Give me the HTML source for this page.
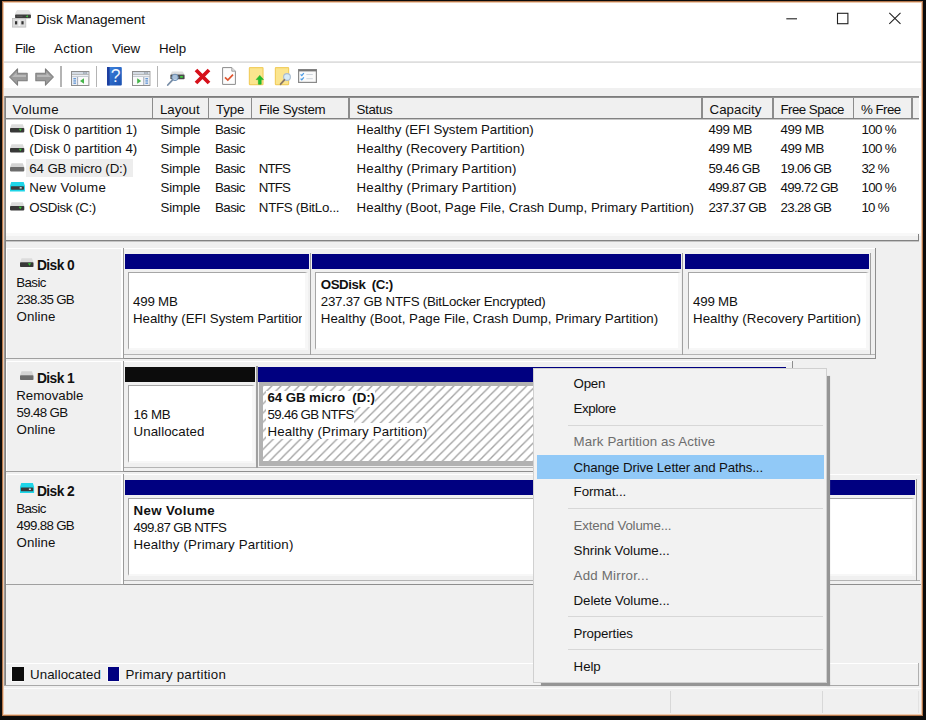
<!DOCTYPE html>
<html lang="en"><head><meta charset="utf-8"><title>Disk Management</title>
<style>
html,body{margin:0;padding:0;}
body{width:926px;height:720px;background:#0b0b0b;overflow:hidden;position:relative;font-family:"Liberation Sans",sans-serif;font-size:13.3px;color:#111;}
.r{position:absolute;box-sizing:border-box;}
.t{position:absolute;white-space:pre;line-height:18px;height:18px;}
svg{position:absolute;overflow:visible;}

</style></head><body>
<div class="r" style="left:2px;top:1px;width:921px;height:715px;background:#f0f0f0;border:1px solid #b4764a;"></div>
<div class="r" style="left:3px;top:2px;width:919px;height:713px;background:transparent;border:1px solid #ecc9ae;"></div>
<div class="r" style="left:4px;top:3px;width:917px;height:85px;background:#fff;"></div>
<div class="r" style="left:4px;top:61px;width:917px;height:1px;background:#e6e6e6;"></div>
<div class="r" style="left:4px;top:62px;width:917px;height:1px;background:#dedede;"></div>
<div class="r" style="left:4px;top:88px;width:917px;height:8px;background:#f0f0f0;"></div>
<svg style="left:780px;top:8px" width="130" height="22" viewBox="0 0 130 22"><g stroke="#222" stroke-width="1.1" fill="none"><path d="M6.3 10.8H17"/><rect x="57.5" y="5.3" width="10.4" height="10.4"/><path d="M109.3 4.9L120.5 15.9M120.5 4.9L109.3 15.9"/></g></svg>
<svg style="left:12px;top:10px" width="19" height="18" viewBox="0 0 19 18"><path d="M5 0.5H16.9L18.9 4.4H3.1Z" fill="#e6e6e6" stroke="#d4d4d4" stroke-width=".4"/><rect x="3.1" y="4.4" width="15.8" height="3.8" rx=".8" fill="#3c3c3c"/><path d="M15.9 5.2V7.4L13.7 6.3Z" fill="#3fd23f"/><rect x="4.6" y="5.8" width="6" height=".9" fill="#5c5c5c"/><rect x="0.5" y="8.4" width="13.3" height="8.7" fill="#dcdcdc" stroke="#bdbdbd" stroke-width=".8"/><rect x="3" y="11.2" width="2.2" height="3.2" fill="#333"/><rect x="9.4" y="11.2" width="2.2" height="3.2" fill="#333"/><rect x="6.4" y="10" width="1.8" height="6" fill="#f4f4f4"/></svg>
<svg style="left:9px;top:68px" width="19" height="18" viewBox="0 0 18.6 17.6"><g><path d="M0.6 8.8L8.4 0.8V5.2H17.8V12.4H8.4V16.8Z" fill="#9b9b9b" stroke="#7c7c7c" stroke-width="1" stroke-linejoin="round"/><path d="M3 8.8L7.4 4.3V6.8H16.6V8.8Z" fill="#b9b9b9"/></g></svg>
<svg style="left:35px;top:68px" width="19" height="18" viewBox="0 0 18.6 17.6"><g transform="translate(18.6 0) scale(-1 1)"><path d="M0.6 8.8L8.4 0.8V5.2H17.8V12.4H8.4V16.8Z" fill="#9b9b9b" stroke="#7c7c7c" stroke-width="1" stroke-linejoin="round"/><path d="M3 8.8L7.4 4.3V6.8H16.6V8.8Z" fill="#b9b9b9"/></g></svg>
<div class="r" style="left:60px;top:66px;width:1.5px;height:21px;background:#b4b4b4;"></div>
<div class="r" style="left:95.6px;top:66px;width:1.5px;height:21px;background:#b4b4b4;"></div>
<div class="r" style="left:156.8px;top:66px;width:1.5px;height:21px;background:#b4b4b4;"></div>
<svg style="left:70.7px;top:70.5px" width="18.4" height="15" viewBox="0 0 18.4 15"><rect x="0.5" y="0.5" width="17.4" height="14" fill="#fafafa" stroke="#8e8e8e"/><rect x="1" y="1" width="16.4" height="2.2" fill="#d3dae3"/><rect x="1" y="3.2" width="16.4" height=".7" fill="#9a9a9a"/><rect x="1" y="3.9" width="16.4" height="1.6" fill="#eceff4"/><rect x="1" y="5.4" width="16.4" height=".6" fill="#a8b0bc"/><rect x="12.2" y="1.4" width="1.4" height="1.2" fill="#7a8694"/><rect x="14.4" y="1.4" width="1.4" height="1.2" fill="#7a8694"/><rect x="1" y="6" width="5.4" height="8" fill="#e9edf3"/><rect x="6.2" y="6" width=".9" height="8" fill="#9aa3b3"/><rect x="2.4" y="7.2" width="2.6" height="1.1" fill="#4a86d0"/><rect x="2.4" y="9.4" width="2.6" height="1.1" fill="#4a86d0"/><rect x="2.4" y="11.6" width="2.6" height="1.1" fill="#4a86d0"/><path d="M13 7.2V12.8L9 10Z" fill="#45b549"/></svg>
<svg style="left:132px;top:70.5px" width="18.4" height="15" viewBox="0 0 18.4 15"><rect x="0.5" y="0.5" width="17.4" height="14" fill="#fafafa" stroke="#8e8e8e"/><rect x="1" y="1" width="16.4" height="2.2" fill="#d3dae3"/><rect x="1" y="3.2" width="16.4" height=".7" fill="#9a9a9a"/><rect x="1" y="3.9" width="16.4" height="1.6" fill="#eceff4"/><rect x="1" y="5.4" width="16.4" height=".6" fill="#a8b0bc"/><rect x="12.2" y="1.4" width="1.4" height="1.2" fill="#7a8694"/><rect x="14.4" y="1.4" width="1.4" height="1.2" fill="#7a8694"/><rect x="12" y="6" width="5.4" height="8" fill="#e9edf3"/><rect x="11.3" y="6" width=".9" height="8" fill="#9aa3b3"/><rect x="13.4" y="7.2" width="2.6" height="1.1" fill="#4a86d0"/><rect x="13.4" y="9.4" width="2.6" height="1.1" fill="#4a86d0"/><rect x="13.4" y="11.6" width="2.6" height="1.1" fill="#4a86d0"/><path d="M5.2 7.2V12.8L9.2 10Z" fill="#45b549"/></svg>
<svg style="left:107px;top:67px" width="15" height="19" viewBox="0 0 15 19"><defs><linearGradient id="hb" x1="0" x2="1" y1="0" y2="1"><stop offset="0" stop-color="#3f86e0"/><stop offset="1" stop-color="#1a4fb0"/></linearGradient></defs><rect x="0" y="0" width="14.8" height="18.4" rx="1" fill="url(#hb)"/><rect x="0" y="0" width="2.6" height="18.4" fill="#1d3fa0"/><text x="8.7" y="15.4" font-family="Liberation Sans,sans-serif" font-size="17.5" text-anchor="middle" fill="#f2f7ff">?</text></svg>
<svg style="left:167px;top:71px" width="18" height="15" viewBox="0 0 18 15"><path d="M5 0.6H15.6L17.6 3.6H3.4Z" fill="#dedede"/><rect x="3.4" y="3.6" width="14.2" height="4.6" rx=".8" fill="#4a4a4a"/><rect x="13.2" y="5" width="2.6" height="1.8" fill="#3fd23f"/><circle cx="8" cy="6.4" r="3.2" fill="#bcd6f2" fill-opacity=".85" stroke="#6e8fb4" stroke-width="1"/><path d="M5.6 8.8L0.8 14" stroke="#7a8fa8" stroke-width="1.8" stroke-linecap="round"/></svg>
<svg style="left:194.3px;top:67.8px" width="17" height="17" viewBox="0 0 17 17"><path d="M2 2L15 15M15 2L2 15" stroke="#d6101a" stroke-width="3.8" stroke-linecap="butt"/></svg>
<svg style="left:222px;top:67.4px" width="14" height="18" viewBox="0 0 14 18"><path d="M0.6 0.6H9.8L13.4 4.2V17.4H0.6Z" fill="#fdfdfd" stroke="#8c8c8c" stroke-width="1"/><path d="M9.8 0.6V4.2H13.4" fill="#e4e4e4" stroke="#8c8c8c" stroke-width=".8"/><path d="M3 10.4L5.8 13L11 7.6" fill="none" stroke="#e0542e" stroke-width="1.7"/></svg>
<svg style="left:248.5px;top:67.4px" width="15" height="18" viewBox="0 0 15 18"><rect x="0.4" y="0.6" width="13.6" height="17" rx=".6" fill="#fbe58e" stroke="#f2cf62" stroke-width="1.2"/><path d="M9.4 17.2V12.6H7.2L10.8 8.4L14.4 12.6H12.2V17.2Z" fill="#22be2c" stroke="#1fae28" stroke-width=".6" stroke-linejoin="round"/></svg>
<svg style="left:274.7px;top:67.4px" width="17" height="18" viewBox="0 0 17 18"><rect x="0.4" y="0.6" width="13.2" height="17" rx=".6" fill="#fbe58e" stroke="#f2cf62" stroke-width="1.2"/><circle cx="12" cy="10" r="3.4" fill="#d6ebf8" stroke="#a9bccf" stroke-width="1.1"/><path d="M9.4 12.8L5.6 17.2" stroke="#8c7a66" stroke-width="1.8" stroke-linecap="round"/></svg>
<svg style="left:298px;top:69.2px" width="19" height="14" viewBox="0 0 19 14"><rect x="0.6" y="0.6" width="17.8" height="12.8" fill="#fafafa" stroke="#8a8a8a" stroke-width="1.2"/><rect x="0.6" y="0.6" width="17.8" height="1.8" fill="#777"/><path d="M2.6 5.4L3.8 6.6L5.8 4.2M2.6 9.6L3.8 10.8L5.8 8.4" fill="none" stroke="#4a9be6" stroke-width="1.3"/><rect x="8.4" y="5" width="6.4" height="1" fill="#cfd6dd"/><rect x="8.4" y="9.2" width="6.4" height="1" fill="#cfd6dd"/></svg>
<div class="r" style="left:4px;top:96px;width:917px;height:137px;background:#fff;"></div>
<div class="r" style="left:4px;top:233px;width:917px;height:3px;background:#f8f8f8;"></div>
<div class="r" style="left:4px;top:96px;width:915px;height:1px;background:#7c7c7c;"></div>
<div class="r" style="left:4px;top:97px;width:915px;height:1px;background:#8e8e8e;"></div>
<div class="r" style="left:4px;top:96px;width:1px;height:144px;background:#9a9a9a;"></div>
<div class="r" style="left:5px;top:96px;width:1px;height:144px;background:#828282;"></div>
<div class="r" style="left:6px;top:98px;width:913px;height:20px;background:#f0f0f0;"></div>
<div class="r" style="left:6px;top:118px;width:913px;height:1px;background:#828282;"></div>
<div class="r" style="left:6px;top:119px;width:913px;height:1px;background:#c8c8c8;"></div>
<div class="r" style="left:4px;top:240px;width:915px;height:1px;background:#828282;"></div>
<div class="r" style="left:4px;top:241px;width:915px;height:1px;background:#c4c4c4;"></div>
<div class="r" style="left:918px;top:234px;width:1px;height:7px;background:#828282;"></div>
<div class="r" style="left:151.6px;top:98px;width:1.8px;height:20px;background:#8c8c8c;"></div>
<div class="r" style="left:207.6px;top:98px;width:1.8px;height:20px;background:#8c8c8c;"></div>
<div class="r" style="left:250.6px;top:98px;width:1.8px;height:20px;background:#8c8c8c;"></div>
<div class="r" style="left:348.1px;top:98px;width:1.8px;height:20px;background:#8c8c8c;"></div>
<div class="r" style="left:701.1px;top:98px;width:1.8px;height:20px;background:#8c8c8c;"></div>
<div class="r" style="left:772.1px;top:98px;width:1.8px;height:20px;background:#8c8c8c;"></div>
<div class="r" style="left:852.6px;top:98px;width:1.8px;height:20px;background:#8c8c8c;"></div>
<div class="r" style="left:911.1px;top:98px;width:1.8px;height:20px;background:#8c8c8c;"></div>
<div class="r" style="left:26px;top:158.5px;width:107px;height:18.5px;background:#ededed;"></div>
<svg style="left:10px;top:124.2px" width="14.3" height="8.4" viewBox="0 0 14.3 8.4"><path d="M1.5 0.2H12.8L14.3 4.2H0Z" fill="#dcdcdc"/><rect x="0" y="4.032" width="14.3" height="4.368" rx="0.8" fill="#383838"/><path d="M8.700000000000001 4.872H11.9L10.3 7.224Z" fill="#35c435"/></svg>
<svg style="left:10px;top:143.6px" width="14.3" height="8.4" viewBox="0 0 14.3 8.4"><path d="M1.5 0.2H12.8L14.3 4.2H0Z" fill="#dcdcdc"/><rect x="0" y="4.032" width="14.3" height="4.368" rx="0.8" fill="#383838"/><path d="M8.700000000000001 4.872H11.9L10.3 7.224Z" fill="#35c435"/></svg>
<svg style="left:10px;top:163.0px" width="14.3" height="8.4" viewBox="0 0 14.3 8.4"><path d="M1.5 0.2H12.8L14.3 4.2H0Z" fill="#d4d4d4"/><rect x="0" y="4.032" width="14.3" height="4.368" rx="0.8" fill="#6c6c6c"/></svg>
<svg style="left:10px;top:181.79999999999998px" width="14.9" height="9.4" viewBox="0 0 14.9 9.4"><path d="M1.2 0H13.700000000000001L14.9 3.7800000000000002V9.4H0V3.7800000000000002Z" fill="#1ed6e8"/><rect x="0.9" y="4.2" width="13.100000000000001" height="3.528" rx="0.6" fill="#3a3a3a"/><rect x="9.700000000000001" y="5.208" width="2" height="1.3" fill="#e8f4f8"/></svg>
<svg style="left:10px;top:201.79999999999998px" width="14.3" height="8.4" viewBox="0 0 14.3 8.4"><path d="M1.5 0.2H12.8L14.3 4.2H0Z" fill="#dcdcdc"/><rect x="0" y="4.032" width="14.3" height="4.368" rx="0.8" fill="#383838"/><path d="M8.700000000000001 4.872H11.9L10.3 7.224Z" fill="#35c435"/></svg>
<div class="r" style="left:6px;top:248px;width:117px;height:110px;background:#f0f0f0;border-top:1px solid #fff;border-left:1px solid #fff;border-right:2px solid #fff;"></div>
<div class="r" style="left:5px;top:358px;width:118px;height:1px;background:#a0a0a0;"></div>
<div class="r" style="left:123px;top:248px;width:1px;height:111px;background:#9a9a9a;"></div>
<div class="r" style="left:124px;top:248px;width:751px;height:1px;background:#fff;"></div>
<div class="r" style="left:124px;top:354px;width:751px;height:1px;background:#b4b4b4;"></div>
<div class="r" style="left:124px;top:358px;width:752px;height:1px;background:#8e8e8e;"></div>
<div class="r" style="left:875px;top:248px;width:1px;height:111px;background:#8e8e8e;"></div>
<div class="r" style="left:125.3px;top:254px;width:183.39999999999998px;height:15px;background:#000080;"></div>
<div class="r" style="left:128.3px;top:272px;width:180.2px;height:78px;background:#fff;border:1px solid #a6a6a6;border-right:3.4px solid #f7f7f7;border-bottom:2px solid #f7f7f7;"></div>
<div class="r" style="left:309.6px;top:253px;width:1.5px;height:102px;background:#a0a0a0;"></div>
<div class="r" style="left:312px;top:254px;width:369px;height:15px;background:#000080;"></div>
<div class="r" style="left:315px;top:272px;width:365.8px;height:78px;background:#fff;border:1px solid #a6a6a6;border-right:3.4px solid #f7f7f7;border-bottom:2px solid #f7f7f7;"></div>
<div class="r" style="left:681.8px;top:253px;width:1.5px;height:102px;background:#a0a0a0;"></div>
<div class="r" style="left:684.6px;top:254px;width:184.69999999999993px;height:15px;background:#000080;"></div>
<div class="r" style="left:687.6px;top:272px;width:181.49999999999994px;height:78px;background:#fff;border:1px solid #a6a6a6;border-right:3.4px solid #f7f7f7;border-bottom:2px solid #f7f7f7;"></div>
<div class="r" style="left:869.8px;top:253px;width:1.5px;height:102px;background:#a0a0a0;"></div>
<svg style="left:19.5px;top:257.5px" width="13.5" height="9" viewBox="0 0 13.5 9"><path d="M1.5 0.2H12.0L13.5 4.5H0Z" fill="#dcdcdc"/><rect x="0" y="4.32" width="13.5" height="4.68" rx="0.8" fill="#383838"/><path d="M7.9 5.22H11.1L9.5 7.74Z" fill="#35c435"/></svg>
<div class="r" style="left:6px;top:361px;width:117px;height:110px;background:#f0f0f0;border-top:1px solid #fff;border-left:1px solid #fff;border-right:2px solid #fff;"></div>
<div class="r" style="left:5px;top:471px;width:118px;height:1px;background:#a0a0a0;"></div>
<div class="r" style="left:123px;top:361px;width:1px;height:111px;background:#9a9a9a;"></div>
<div class="r" style="left:124px;top:361px;width:667.5px;height:1px;background:#fff;"></div>
<div class="r" style="left:124px;top:467px;width:667.5px;height:1px;background:#b4b4b4;"></div>
<div class="r" style="left:124px;top:471px;width:668.5px;height:1px;background:#8e8e8e;"></div>
<div class="r" style="left:791.5px;top:361px;width:1px;height:111px;background:#8e8e8e;"></div>
<div class="r" style="left:125.3px;top:367px;width:130.0px;height:15px;background:#0c0c0c;"></div>
<div class="r" style="left:128.3px;top:385px;width:126.8px;height:78px;background:#fff;border:1px solid #a6a6a6;border-right:3.4px solid #f7f7f7;border-bottom:2px solid #f7f7f7;"></div>
<div class="r" style="left:256.2px;top:366px;width:1.5px;height:102px;background:#a0a0a0;"></div>
<div class="r" style="left:258.4px;top:367px;width:527.9px;height:15px;background:#000080;"></div>
<div class="r" style="left:259.0px;top:382px;width:527.3px;height:83.5px;background:#b2b2b2;"></div>
<div class="r" style="left:262.6px;top:385.8px;width:520.0999999999999px;height:75.30000000000001px;background:#fff;"></div>
<svg style="left:262.6px;top:385.8px;overflow:hidden" width="520.10" height="75.30"><defs><pattern id="hp" width="9.1" height="9.1" patternUnits="userSpaceOnUse" patternTransform="translate(8.75 0)"><path d="M-1 10.1L10.1 -1M-1 1L1 -1M8.1 10.1L10.1 8.1" stroke="#a2a2a2" stroke-width="1.3" fill="none"/></pattern></defs><rect width="100%" height="100%" fill="url(#hp)"/></svg>
<svg style="left:19.5px;top:370.5px" width="13.5" height="9" viewBox="0 0 13.5 9"><path d="M1.5 0.2H12.0L13.5 4.5H0Z" fill="#d4d4d4"/><rect x="0" y="4.32" width="13.5" height="4.68" rx="0.8" fill="#6c6c6c"/></svg>
<div class="r" style="left:265.7px;top:391px;width:109.3px;height:16px;background:#fff;"></div>
<div class="r" style="left:265.7px;top:407px;width:88.8px;height:16px;background:#fff;"></div>
<div class="r" style="left:265.7px;top:423px;width:161.5px;height:15.5px;background:#fff;"></div>
<div class="r" style="left:6px;top:474px;width:117px;height:110px;background:#f0f0f0;border-top:1px solid #fff;border-left:1px solid #fff;border-right:2px solid #fff;"></div>
<div class="r" style="left:5px;top:584px;width:118px;height:1px;background:#a0a0a0;"></div>
<div class="r" style="left:123px;top:474px;width:1px;height:111px;background:#9a9a9a;"></div>
<div class="r" style="left:124px;top:474px;width:796px;height:1px;background:#fff;"></div>
<div class="r" style="left:124px;top:580px;width:796px;height:1px;background:#b4b4b4;"></div>
<div class="r" style="left:124px;top:584px;width:797px;height:1px;background:#8e8e8e;"></div>
<div class="r" style="left:125.3px;top:480px;width:789.6px;height:15px;background:#000080;"></div>
<div class="r" style="left:128.3px;top:498px;width:786.4px;height:78px;background:#fff;border:1px solid #a6a6a6;border-right:3.4px solid #f7f7f7;border-bottom:2px solid #f7f7f7;"></div>
<div class="r" style="left:915.6px;top:479px;width:1.5px;height:102px;background:#a0a0a0;"></div>
<svg style="left:19.5px;top:482.9px" width="14.1" height="10" viewBox="0 0 14.1 10"><path d="M1.2 0H12.9L14.1 4.05V10H0V4.05Z" fill="#1ed6e8"/><rect x="0.9" y="4.5" width="12.3" height="3.78" rx="0.6" fill="#3a3a3a"/><rect x="8.9" y="5.58" width="2" height="1.3" fill="#e8f4f8"/></svg>
<div class="r" style="left:4px;top:240px;width:1px;height:446px;background:#9a9a9a;"></div>
<div class="r" style="left:5px;top:240px;width:1px;height:446px;background:#828282;"></div>
<div class="r" style="left:6px;top:663px;width:912px;height:1px;background:#fff;"></div>
<div class="r" style="left:6px;top:664px;width:912px;height:21px;background:#f1f1f1;"></div>
<div class="r" style="left:11.4px;top:666.6px;width:13px;height:15px;background:#fafafa;"></div>
<div class="r" style="left:12.2px;top:667.4px;width:11.6px;height:13.5px;background:#0c0c0c;"></div>
<div class="r" style="left:107px;top:666.6px;width:13px;height:15px;background:#fafafa;"></div>
<div class="r" style="left:107.8px;top:667.4px;width:11.6px;height:13.5px;background:#000080;"></div>
<div class="r" style="left:4px;top:684.6px;width:915px;height:1.4px;background:#a8a8a8;"></div>
<div class="r" style="left:918px;top:663px;width:1px;height:22px;background:#b0b0b0;"></div>
<div class="r" style="left:4px;top:688px;width:917px;height:1px;background:#fbfbfb;"></div>
<div class="r" style="left:918px;top:691px;width:1px;height:22px;background:#e2e2e2;"></div>
<div class="r" style="left:670px;top:691px;width:1px;height:22px;background:#d8d8d8;"></div>
<div class="r" style="left:822px;top:691px;width:1px;height:22px;background:#d8d8d8;"></div>
<div class="r" style="left:826.5px;top:375.6px;width:3px;height:310px;background:#959595;box-shadow:0 0 1px #aaa;"></div>
<div class="r" style="left:541px;top:682px;width:288.5px;height:3.5px;background:#959595;box-shadow:0 0 1px #aaa;"></div>
<div class="r" style="left:533px;top:368px;width:293.5px;height:314.5px;background:#f2f2f2;border:1px solid #d0d0d0;"></div>
<div class="r" style="left:568px;top:425.2px;width:255px;height:1px;background:#d7d7d7;"></div>
<div class="r" style="left:568px;top:508.4px;width:255px;height:1px;background:#d7d7d7;"></div>
<div class="r" style="left:568px;top:616.2px;width:255px;height:1px;background:#d7d7d7;"></div>
<div class="r" style="left:568px;top:649.2px;width:255px;height:1px;background:#d7d7d7;"></div>
<div class="r" style="left:536.6px;top:454.5px;width:287px;height:24.5px;background:#91c9f7;"></div>
<div class="t " style="left:36.50px;top:11px;font-size:13.6px;letter-spacing:-0.071px;">Disk Management</div>
<div class="t " style="left:15.00px;top:40px;font-size:13.3px;letter-spacing:-0.359px;">File</div>
<div class="t " style="left:54.00px;top:40px;font-size:13.3px;letter-spacing:0.339px;">Action</div>
<div class="t " style="left:112.00px;top:40px;font-size:13.3px;letter-spacing:-0.148px;">View</div>
<div class="t " style="left:159.00px;top:40px;font-size:13.3px;letter-spacing:-0.090px;">Help</div>
<div class="t " style="left:12.60px;top:101px;font-size:13.3px;letter-spacing:0.340px;">Volume</div>
<div class="t " style="left:160.00px;top:101px;font-size:13.3px;letter-spacing:-0.056px;">Layout</div>
<div class="t " style="left:216.00px;top:101px;font-size:13.3px;letter-spacing:-0.107px;">Type</div>
<div class="t " style="left:259.00px;top:101px;font-size:13.3px;letter-spacing:-0.278px;">File System</div>
<div class="t " style="left:356.50px;top:101px;font-size:13.3px;letter-spacing:-0.317px;">Status</div>
<div class="t " style="left:709.50px;top:101px;font-size:13.3px;letter-spacing:0.033px;">Capacity</div>
<div class="t " style="left:780.50px;top:101px;font-size:13.3px;letter-spacing:-0.535px;">Free Space</div>
<div class="t " style="left:861.00px;top:101px;font-size:13.3px;letter-spacing:-0.543px;">% Free</div>
<div class="t " style="left:29.30px;top:121px;font-size:13.3px;letter-spacing:0.005px;">(Disk 0 partition 1)</div>
<div class="t " style="left:160.40px;top:121px;font-size:13.3px;letter-spacing:-0.109px;">Simple</div>
<div class="t " style="left:215.00px;top:121px;font-size:13.3px;letter-spacing:-0.543px;">Basic</div>
<div class="t " style="left:356.60px;top:121px;font-size:13.3px;letter-spacing:-0.058px;">Healthy (EFI System Partition)</div>
<div class="t " style="left:708.50px;top:121px;font-size:13.3px;letter-spacing:-0.388px;">499 MB</div>
<div class="t " style="left:780.50px;top:121px;font-size:13.3px;letter-spacing:-0.388px;">499 MB</div>
<div class="t " style="left:861.40px;top:121px;font-size:13.3px;letter-spacing:-0.621px;">100 %</div>
<div class="t " style="left:29.30px;top:140px;font-size:13.3px;letter-spacing:0.005px;">(Disk 0 partition 4)</div>
<div class="t " style="left:160.40px;top:140px;font-size:13.3px;letter-spacing:-0.109px;">Simple</div>
<div class="t " style="left:215.00px;top:140px;font-size:13.3px;letter-spacing:-0.543px;">Basic</div>
<div class="t " style="left:356.60px;top:140px;font-size:13.3px;letter-spacing:0.065px;">Healthy (Recovery Partition)</div>
<div class="t " style="left:708.50px;top:140px;font-size:13.3px;letter-spacing:-0.388px;">499 MB</div>
<div class="t " style="left:780.50px;top:140px;font-size:13.3px;letter-spacing:-0.388px;">499 MB</div>
<div class="t " style="left:861.40px;top:140px;font-size:13.3px;letter-spacing:-0.621px;">100 %</div>
<div class="t " style="left:29.30px;top:160px;font-size:13.3px;letter-spacing:-0.128px;">64 GB micro (D:)</div>
<div class="t " style="left:160.40px;top:160px;font-size:13.3px;letter-spacing:-0.109px;">Simple</div>
<div class="t " style="left:215.00px;top:160px;font-size:13.3px;letter-spacing:-0.543px;">Basic</div>
<div class="t " style="left:258.80px;top:160px;font-size:13.3px;letter-spacing:-0.880px;">NTFS</div>
<div class="t " style="left:356.60px;top:160px;font-size:13.3px;letter-spacing:0.151px;">Healthy (Primary Partition)</div>
<div class="t " style="left:708.50px;top:160px;font-size:13.3px;letter-spacing:-0.623px;">59.46 GB</div>
<div class="t " style="left:780.50px;top:160px;font-size:13.3px;letter-spacing:-0.673px;">19.06 GB</div>
<div class="t " style="left:861.40px;top:160px;font-size:13.3px;letter-spacing:-0.678px;">32 %</div>
<div class="t " style="left:29.30px;top:179px;font-size:13.3px;letter-spacing:0.204px;">New Volume</div>
<div class="t " style="left:160.40px;top:179px;font-size:13.3px;letter-spacing:-0.109px;">Simple</div>
<div class="t " style="left:215.00px;top:179px;font-size:13.3px;letter-spacing:-0.543px;">Basic</div>
<div class="t " style="left:258.80px;top:179px;font-size:13.3px;letter-spacing:-0.880px;">NTFS</div>
<div class="t " style="left:356.60px;top:179px;font-size:13.3px;letter-spacing:0.151px;">Healthy (Primary Partition)</div>
<div class="t " style="left:708.50px;top:179px;font-size:13.3px;letter-spacing:-0.653px;">499.87 GB</div>
<div class="t " style="left:780.50px;top:179px;font-size:13.3px;letter-spacing:-0.675px;">499.72 GB</div>
<div class="t " style="left:861.40px;top:179px;font-size:13.3px;letter-spacing:-0.621px;">100 %</div>
<div class="t " style="left:29.30px;top:199px;font-size:13.3px;letter-spacing:-0.393px;">OSDisk (C:)</div>
<div class="t " style="left:160.40px;top:199px;font-size:13.3px;letter-spacing:-0.109px;">Simple</div>
<div class="t " style="left:215.00px;top:199px;font-size:13.3px;letter-spacing:-0.543px;">Basic</div>
<div class="t " style="left:258.80px;top:199px;font-size:13.3px;letter-spacing:-0.267px;">NTFS (BitLo...</div>
<div class="t " style="left:356.60px;top:199px;font-size:13.3px;letter-spacing:0.021px;">Healthy (Boot, Page File, Crash Dump, Primary Partition)</div>
<div class="t " style="left:708.50px;top:199px;font-size:13.3px;letter-spacing:-0.653px;">237.37 GB</div>
<div class="t " style="left:780.50px;top:199px;font-size:13.3px;letter-spacing:-0.673px;">23.28 GB</div>
<div class="t " style="left:861.40px;top:199px;font-size:13.3px;letter-spacing:-0.678px;">10 %</div>
<div class="t " style="left:37.00px;top:257px;font-size:13.8px;letter-spacing:-0.609px;font-weight:bold;">Disk 0</div>
<div class="t " style="left:16.30px;top:274px;font-size:13.3px;letter-spacing:-0.603px;">Basic</div>
<div class="t " style="left:16.50px;top:291px;font-size:13.3px;letter-spacing:-0.675px;">238.35 GB</div>
<div class="t " style="left:16.50px;top:308px;font-size:13.3px;letter-spacing:0.094px;">Online</div>
<div class="t " style="left:133.00px;top:293px;font-size:13.3px;letter-spacing:-0.205px;">499 MB</div>
<div class="t " style="left:133.00px;top:310px;font-size:13.3px;letter-spacing:-0.058px;width:168.8px;overflow:hidden;">Healthy (EFI System Partition)</div>
<div class="t " style="left:320.80px;top:276px;font-size:13.3px;letter-spacing:-0.465px;font-weight:bold;">OSDisk  (C:)</div>
<div class="t " style="left:320.80px;top:293px;font-size:13.3px;letter-spacing:-0.245px;">237.37 GB NTFS (BitLocker Encrypted)</div>
<div class="t " style="left:320.80px;top:310px;font-size:13.3px;letter-spacing:0.021px;">Healthy (Boot, Page File, Crash Dump, Primary Partition)</div>
<div class="t " style="left:693.00px;top:293px;font-size:13.3px;letter-spacing:-0.205px;">499 MB</div>
<div class="t " style="left:693.00px;top:310px;font-size:13.3px;letter-spacing:0.061px;">Healthy (Recovery Partition)</div>
<div class="t " style="left:37.00px;top:370px;font-size:13.8px;letter-spacing:-0.609px;font-weight:bold;">Disk 1</div>
<div class="t " style="left:16.30px;top:387px;font-size:13.3px;letter-spacing:-0.030px;">Removable</div>
<div class="t " style="left:16.50px;top:404px;font-size:13.3px;letter-spacing:-0.661px;">59.48 GB</div>
<div class="t " style="left:16.50px;top:421px;font-size:13.3px;letter-spacing:0.094px;">Online</div>
<div class="t " style="left:133.50px;top:406px;font-size:13.3px;letter-spacing:-0.328px;">16 MB</div>
<div class="t " style="left:133.50px;top:423px;font-size:13.3px;letter-spacing:0.070px;">Unallocated</div>
<div class="t " style="left:267.40px;top:389px;font-size:13.3px;letter-spacing:-0.065px;font-weight:bold;">64 GB micro  (D:)</div>
<div class="t " style="left:267.40px;top:406px;font-size:13.3px;letter-spacing:-0.630px;">59.46 GB NTFS</div>
<div class="t " style="left:267.40px;top:423px;font-size:13.3px;letter-spacing:0.151px;">Healthy (Primary Partition)</div>
<div class="t " style="left:37.00px;top:483px;font-size:13.8px;letter-spacing:-0.609px;font-weight:bold;">Disk 2</div>
<div class="t " style="left:16.30px;top:500px;font-size:13.3px;letter-spacing:-0.603px;">Basic</div>
<div class="t " style="left:16.50px;top:517px;font-size:13.3px;letter-spacing:-0.675px;">499.88 GB</div>
<div class="t " style="left:16.50px;top:534px;font-size:13.3px;letter-spacing:0.094px;">Online</div>
<div class="t " style="left:133.50px;top:502px;font-size:13.3px;letter-spacing:0.352px;font-weight:bold;">New Volume</div>
<div class="t " style="left:133.50px;top:519px;font-size:13.3px;letter-spacing:-0.664px;">499.87 GB NTFS</div>
<div class="t " style="left:133.50px;top:536px;font-size:13.3px;letter-spacing:0.151px;">Healthy (Primary Partition)</div>
<div class="t " style="left:30.00px;top:666px;font-size:13.3px;letter-spacing:0.070px;">Unallocated</div>
<div class="t " style="left:125.50px;top:666px;font-size:13.3px;letter-spacing:0.217px;">Primary partition</div>
<div class="t " style="left:573.60px;top:375px;font-size:13.3px;letter-spacing:-0.233px;">Open</div>
<div class="t " style="left:573.60px;top:400px;font-size:13.3px;letter-spacing:-0.428px;">Explore</div>
<div class="t " style="left:573.60px;top:433px;font-size:13.3px;letter-spacing:0.111px;color:#6d6d6d;">Mark Partition as Active</div>
<div class="t " style="left:573.60px;top:459px;font-size:13.3px;letter-spacing:-0.133px;">Change Drive Letter and Paths...</div>
<div class="t " style="left:573.60px;top:483px;font-size:13.3px;letter-spacing:-0.067px;">Format...</div>
<div class="t " style="left:573.60px;top:517px;font-size:13.3px;letter-spacing:-0.177px;color:#6d6d6d;">Extend Volume...</div>
<div class="t " style="left:573.60px;top:542px;font-size:13.3px;letter-spacing:-0.052px;">Shrink Volume...</div>
<div class="t " style="left:573.60px;top:567px;font-size:13.3px;letter-spacing:0.214px;color:#6d6d6d;">Add Mirror...</div>
<div class="t " style="left:573.60px;top:592px;font-size:13.3px;letter-spacing:-0.099px;">Delete Volume...</div>
<div class="t " style="left:573.60px;top:625px;font-size:13.3px;letter-spacing:-0.151px;">Properties</div>
<div class="t " style="left:573.60px;top:658px;font-size:13.3px;letter-spacing:-0.065px;">Help</div>
</body></html>
